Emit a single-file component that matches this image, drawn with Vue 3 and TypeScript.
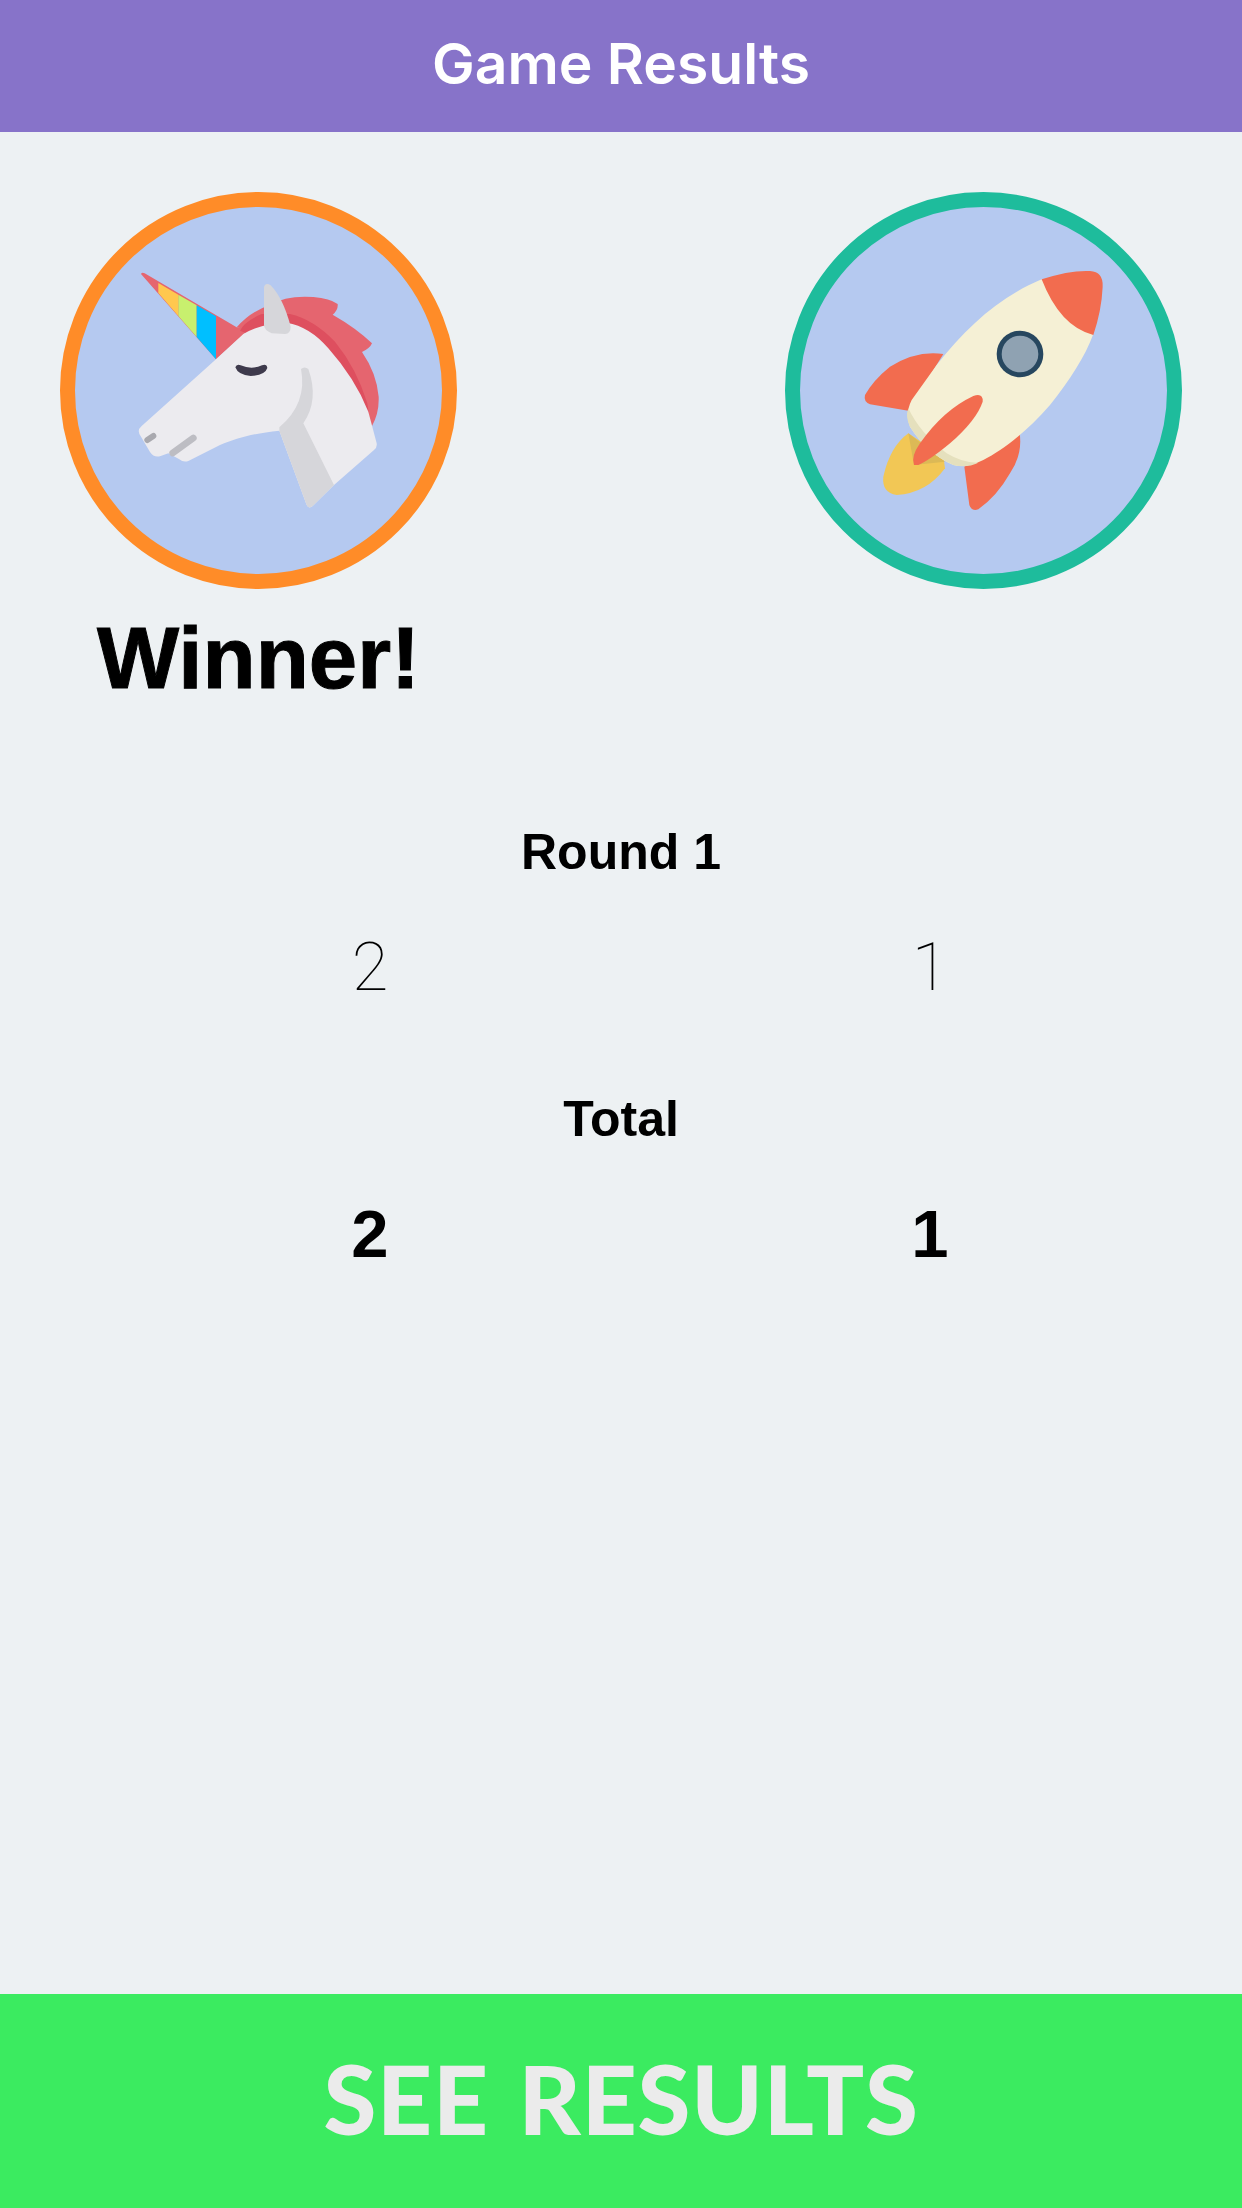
<script setup lang="ts">
type RoundScore = { label: string; scores: [number, number] };

const rounds: RoundScore[] = [{ label: 'Round 1', scores: [2, 1] }];
const totals: [number, number] = [2, 1];
</script>

<template>
  <div class="screen">
    <header class="title-bar">Game Results</header>
    <main class="content">
      <section class="players">
        <div class="player">
          <div class="avatar avatar-orange">
            <svg viewBox="105 111 1101 1101" class="art">
              <path d="M303 312 Q306 305 314 310 L590 472 L630 476 L528 568 Z" fill="#e5656f" />
              <path d="M355 339 L415 374 L415 438 L355 369 Z" fill="#ffc84f" />
              <path d="M415 374 L470 406 L470 501 L415 438 Z" fill="#c8f06e" />
              <path d="M470 406 L528 439 L528 568 L470 501 Z" fill="#00bfff" />
              <path d="M590 472 Q630 425 690 405 Q740 375 820 381 Q870 385 893 402 Q895 420 878 434 Q950 475 996 520 Q990 535 966 546 Q1010 610 1016 680 Q1018 730 995 770 L800 520 Z" fill="#e5656f" />
              <path d="M600 482 Q612 455 665 432 L750 432 Q820 448 885 515 Q950 595 982 700 L992 770 L800 560 Z" fill="#de4f5f" />
              <path d="M528 568 L610 492 Q670 458 740 458 Q810 470 865 535 Q945 625 985 725 L1010 820 Q1012 832 1002 840 L882 945 L818 1008 Q806 1018 800 1005 L718 782 C640 790 590 805 540 825 L445 873 Q430 878 418 868 L385 850 L362 858 Q342 864 330 846 L304 802 Q288 782 305 768 Z" fill="#ecebef" />
              <path d="M783 597 Q803 700 718 772 L718 782 L800 1005 Q806 1018 818 1008 L882 945 L790 760 Q838 690 805 597 Q794 588 783 597 Z" fill="#d6d6da" />
              <path d="M672 352 Q676 336 692 346 Q730 385 752 470 Q752 490 735 492 L695 490 Q672 480 672 465 Z" fill="#d6d6da" />
              <path d="M586 592 Q590 580 602 586 Q635 600 666 586 Q680 580 682 594 Q675 616 632 618 Q594 615 586 592 Z" fill="#3e3a4c" />
              <path d="M322 810 L340 798" fill="none" stroke="#a9a9af" stroke-width="18" stroke-linecap="round" />
              <path d="M398 849 L460 804" fill="none" stroke="#bdbdc3" stroke-width="20" stroke-linecap="round" />
            </svg>
          </div>
          <div class="winner">Winner!</div>
        </div>
        <div class="player">
          <div class="avatar avatar-teal">
            <svg viewBox="90 111 1101 1101" class="art">
              <path d="M415 790 Q360 830 340 920 Q335 968 380 975 Q470 970 525 895 L520 860 Z" fill="#f2c755" />
              <path d="M415 790 L432 885 L525 875 Z" fill="#dcb956" />
              <path d="M520 552 Q440 540 360 590 Q310 630 285 675 Q280 695 300 703 L415 722 Z" fill="#f26c4f" />
              <path d="M748 785 Q760 850 720 910 Q680 980 625 1018 Q605 1025 598 1005 L583 890 Z" fill="#f26c4f" />
              <path d="M815 328 C690 380 590 470 500 585 L425 690 Q405 730 420 770 Q470 850 550 885 Q590 895 640 870 C700 840 770 785 840 705 C900 630 945 560 970 492 Z" fill="#f5f0d5" />
              <path d="M415 715 Q405 740 420 770 Q470 850 550 885 Q590 895 625 878 Q580 880 530 850 Q450 790 415 715 Z" fill="#e5e0bd" />
              <path d="M815 328 Q900 300 960 303 Q1000 305 998 350 Q995 420 970 495 Q870 470 815 328 Z" fill="#f26c4f" />
              <path d="M432 885 Q422 860 450 820 Q520 720 610 678 Q640 668 638 695 Q620 750 540 820 Q480 870 445 885 Z" fill="#f26c4f" />
              <circle cx="750" cy="552" r="70" fill="#27475f" />
              <circle cx="750" cy="552" r="55" fill="#8fa2b2" />
            </svg>
          </div>
        </div>
      </section>

      <section v-for="round in rounds" :key="round.label" class="round">
        <div class="round-label">{{ round.label }}</div>
        <div class="scores">
          <span v-for="(score, i) in round.scores" :key="i" class="score">{{ score }}</span>
        </div>
      </section>

      <section class="total">
        <div class="total-label">Total</div>
        <div class="scores">
          <span v-for="(score, i) in totals" :key="i" class="score score-bold">{{ score }}</span>
        </div>
      </section>
    </main>
    <footer class="action">SEE RESULTS</footer>
  </div>
</template>

<style scoped>
.screen {
  width: 1242px;
  height: 2208px;
  display: flex;
  flex-direction: column;
  background: #edf1f3;
  color: #000;
  font-family: "Liberation Sans", Arial, sans-serif;
  overflow: hidden;
}
.title-bar {
  box-sizing: border-box;
  height: 132px;
  flex: none;
  display: flex;
  align-items: center;
  justify-content: center;
  padding-bottom: 6px;
  background: #8773c9;
  color: #fff;
  font-family: Inter, sans-serif;
  font-size: 57px;
  font-weight: 600;
}
.content {
  flex: 1;
  padding-top: 60px;
}
.players {
  display: flex;
  justify-content: space-between;
  padding: 0 60px;
}
.player {
  width: 397px;
}
.avatar {
  box-sizing: border-box;
  width: 397px;
  height: 397px;
  border: 15px solid;
  border-radius: 50%;
  background: #b5c9f0;
}
.avatar-orange {
  border-color: #ff8c28;
}
.avatar-teal {
  border-color: #1ebc9c;
}
.art {
  display: block;
  width: 100%;
  height: 100%;
}
.winner {
  margin-top: 19px;
  line-height: 100px;
  text-align: center;
  font-size: 87px;
  font-weight: 700;
  -webkit-text-stroke: 1px #000;
}
.round {
  margin-top: 114px;
}
.total {
  margin-top: 82px;
}
.round-label,
.total-label {
  line-height: 60px;
  text-align: center;
  font-size: 50px;
  font-weight: 700;
}
.scores {
  display: grid;
  grid-template-columns: 1fr 1fr;
  margin-top: 45px;
  padding: 0 32px 0 90px;
}
.score {
  line-height: 80px;
  text-align: center;
  font-family: Roboto, sans-serif;
  font-size: 67px;
  font-weight: 100;
}
.score-bold {
  font-family: "Liberation Sans", Arial, sans-serif;
  font-weight: 700;
}
.action {
  box-sizing: border-box;
  height: 214px;
  flex: none;
  display: flex;
  align-items: center;
  justify-content: center;
  padding-bottom: 8px;
  background: #3beb60;
  color: #ebebeb;
  font-family: Lato, sans-serif;
  font-size: 96px;
  font-weight: 900;
  letter-spacing: 0.8px;
  word-spacing: 6px;
}
</style>
